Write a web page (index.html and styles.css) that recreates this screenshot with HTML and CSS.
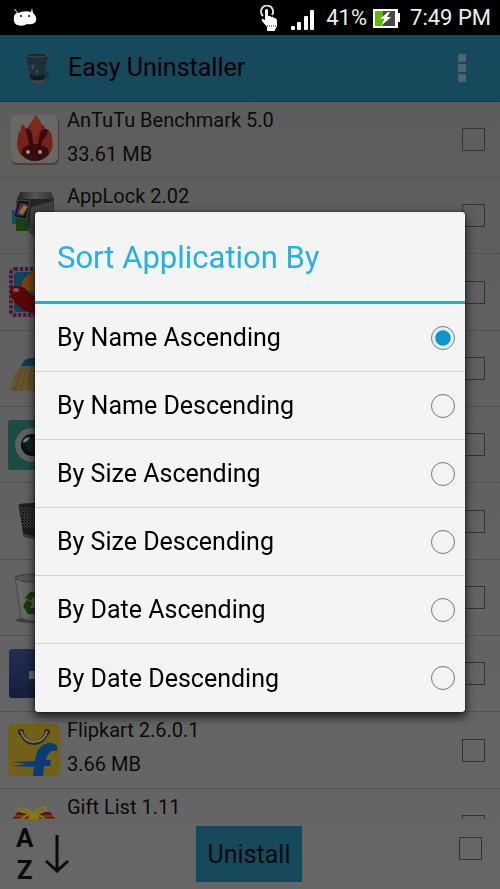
FILE: index.html
```html
<!DOCTYPE html>
<html lang="en">
<head>
<meta charset="utf-8">
<meta name="viewport" content="width=device-width, initial-scale=1">
<title>Easy Uninstaller</title>
<link rel="stylesheet" href="styles.css">
</head>
<body>
<div class="screen">
  <header class="status">
    <svg class="droid" width="24" height="20" viewBox="0 0 24 20"><path d="M2 1l3 4Q11 2 18 4L19 0l1 5Q24 8 23 13Q21 17 14 16Q10 19 4 17Q0 15 1 9Q1 6 4 5L1 1z" fill="#fff"/><circle cx="8" cy="8" r="1"/><circle cx="16" cy="8" r="1"/></svg>
    <svg class="touch" width="18" height="26" viewBox="0 0 18 26"><path d="M3 11A6 6 0 1 1 12 10" fill="none" stroke="#ddd" stroke-width="2"/><path d="M5 5q2-2 3 0v6q2-1 3 1 2-1 3 1 3 0 3 3v5l-2 4v1H7v-4l-5-6q-1-3 1-2l2 1z" fill="#fff"/><path d="M7 21h9" stroke="#222" stroke-dasharray="1 1"/></svg>
    <svg class="signal" width="24" height="22" viewBox="0 0 24 22" fill="#fff"><rect y="17" width="4" height="4" rx="1"/><rect x="6" y="13" width="4" height="8" rx="1"/><rect x="13" y="7" width="4" height="14" rx="1"/><rect x="19" y="1" width="4" height="20" rx="1"/></svg>
    <span class="charge">41%</span>
    <svg class="battery" width="27" height="20" viewBox="0 0 27 20"><path d="M0 1h25v4h2v9h-2v6H0z" fill="#fff"/><path d="M2 3h8v15H2z" fill="#5fb900"/><path d="M10 3h12v15H10z" fill="#484848"/><path d="M15 4L7 11h4l-2 6 9-8h-4l3-5z" fill="#fff"/></svg>
    <span class="clock">7:49 PM</span>
  </header>

  <div class="appbar">
    <svg class="logo" width="28" height="34" viewBox="0 0 28 34"><defs><pattern id="mesh" width="2" height="2" patternUnits="userSpaceOnUse"><rect width="2" height="2" fill="#173746"/><path d="M0 0h1v1H0zM1 1h1v1H1z" fill="#20262a"/></pattern></defs><path d="M17 31l8-6-1-6z" fill="#113746"/><path d="M2 4h22l-4 25q-7 4-13 0z" fill="url(#mesh)" stroke="#30393d"/><path d="M5 23q8 5 16 0l-1 6q-7 4-13 0z" fill="#15191b"/><path d="M7 14l3-2 1 5-3 2zM11 20l3-2 1 4-3 1z" fill="#38454b"/><ellipse cx="13" cy="4" rx="11" ry="2" fill="#20282c" stroke="#414b50"/><path d="M7 28q7 3 13 0v3q-7 3-13 0z" fill="#414749"/></svg>
    <h1 class="name">Easy Uninstaller</h1>
    <button class="more" aria-label="More options"><span class="dot"></span><span class="dot"></span><span class="dot"></span></button>
  </div>

  <ul class="apps">
    <li class="app">
      <svg class="icon" viewBox="0 0 52 52"><rect x="3" y="3" width="48" height="48" rx="6" fill="#424241"/><rect x="3" y="1" width="47" height="48" rx="6" fill="#696865"/><path d="M27 1q-1 6-5 9l-3 5q-5-4-3-5-4 3-3 9l-2-3-1 7q-5 21 17 24 21-3 17-24-1-5-4-8l-1 4q-2-8-6-9-1-5-6-9z" fill="#75221a"/><path d="M27 1q-1 6-5 9l3 14 7-4 1-10q-1-5-6-9z" fill="#7b2d1c"/><path d="M17 15q6-2 7 6l1 9h5l2-12q5-5 8-2-1 7-5 9l-2 6q10 3 7 10-5 6-13 6t-13-6q-2-8 7-10-1-10-4-16z" fill="#390b0e"/><circle cx="20" cy="38" r="2" fill="#959391"/><circle cx="32" cy="38" r="2" fill="#959391"/><path d="M13 12l2-2v3l-2 1z" fill="#752b1c"/></svg>
      <div class="text"><div>AnTuTu Benchmark 5.0</div><div>33.61 MB</div></div>
      <input class="box" type="checkbox" aria-label="AnTuTu Benchmark 5.0">
    </li>
    <li class="app">
      <svg class="icon" viewBox="0 0 52 52"><defs><linearGradient id="steel"><stop stop-color="#222"/><stop offset=".5" stop-color="#555"/><stop offset="1" stop-color="#303030"/></linearGradient></defs><path d="M12 2h31l3 7v32H17L8 12z" fill="url(#steel)"/><path d="M10 9h34v32H22z" fill="#242424"/><path d="M4 20h12v14H4z" fill="#075365"/><path d="M8 28h12v13H8z" fill="#18410e"/><path d="M10 10l12 1-4 18-12-2z" fill="#111" stroke="#454545"/><path d="M12 13l8 1-4 12-8-1z" fill="#522566"/><path d="M16 15l4 2-6 8-3-3z" fill="#91751f"/><path d="M23 17l22-6v32l-20 3-4-4z" fill="#3f3f3f"/><circle cx="37" cy="27" r="5" fill="#222"/></svg>
      <div class="text"><div>AppLock 2.02</div></div>
      <input class="box" type="checkbox" aria-label="AppLock 2.02">
    </li>
    <li class="app">
      <svg class="icon" viewBox="0 0 52 52"><rect x="1" y="1" width="50" height="50" rx="5" fill="#5d535a"/><rect x="3" y="3" width="46" height="46" rx="4" fill="none" stroke="#4c1639" stroke-width="4" stroke-dasharray="3 2"/><rect x="6" y="6" width="40" height="40" rx="4" fill="#07465e"/><path d="M13 23q-1-12 17-20v24z" fill="#78420e"/><path d="M2 27q-1-8 8-7 7 0 11 7 4 5 12 4v18Q8 46 2 27z" fill="#5b0606"/><ellipse cx="8" cy="24" rx="3" ry="2" fill="#8b4e4e"/></svg>
      <div class="text"></div>
      <input class="box" type="checkbox" aria-label="App 3">
    </li>
    <li class="app">
      <svg class="icon" viewBox="0 0 52 52"><path d="M16 16h28l5 32H3q1-18 10-25z" fill="#67532d"/><path d="M13 23q4-8 10-8h17v8z" fill="#083d57"/><path d="M14 25L7 47M18 25l-5 22M23 25l-3 22M28 25v22" stroke="#57461f"/></svg>
      <div class="text"></div>
      <input class="box" type="checkbox" aria-label="App 4">
    </li>
    <li class="app">
      <svg class="icon" viewBox="0 0 52 52"><rect y="1" width="52" height="50" rx="3" fill="#1c4c45"/><circle cx="24" cy="26" r="17" fill="#5c6261"/><circle cx="24" cy="26" r="11" fill="#07110f"/><circle cx="24" cy="26" r="7" fill="#11231f"/><path d="M15 24q0-6 7-6-2 5-7 6z" fill="#78807e"/></svg>
      <div class="text"></div>
      <input class="box" type="checkbox" aria-label="App 5">
    </li>
    <li class="app">
      <svg class="icon" viewBox="0 0 52 52"><defs><pattern id="wire" width="3" height="3" patternUnits="userSpaceOnUse"><rect width="3" height="3" fill="#404040"/><path d="M0 0l3 3M3 0L0 3" stroke="#171717"/></pattern></defs><path d="M11 10h30l-5 31q-10 4-20 0z" fill="url(#wire)" stroke="#202020"/><path d="M15 33h22l-1 8q-10 4-20 0z" fill="#1d1d1f"/><ellipse cx="26" cy="10" rx="15" ry="2" fill="#1e1e1e"/><path d="M15 38q11 5 21 0v4q-10 3-20 0z" fill="#3b3b3f"/></svg>
      <div class="text"></div>
      <input class="box" type="checkbox" aria-label="App 6">
    </li>
    <li class="app">
      <svg class="icon" viewBox="0 0 52 52"><ellipse cx="24" cy="48" rx="16" ry="3" fill="#3d3d3d"/><path d="M7 6h38l-6 40q-12 6-26 0z" fill="#646464" stroke="#4b4b4b"/><ellipse cx="26" cy="6" rx="19" ry="4" fill="#555" stroke="#3a3a3a"/><path d="M11 8l6 38" stroke="#707070"/><path d="M15 34l4-6 6 3-3 5h7v6h-9zM17 26l5-6h9v5h-6l-2 4z" fill="#153d0b"/></svg>
      <div class="text"></div>
      <input class="box" type="checkbox" aria-label="App 7">
    </li>
    <li class="app">
      <svg class="icon" viewBox="0 0 52 52"><defs><linearGradient id="blue" x2="0" y2="1"><stop stop-color="#202f53"/><stop offset="1" stop-color="#12203f"/></linearGradient></defs><rect x="1" y="1" width="50" height="49" rx="3" fill="url(#blue)"/><path d="M21 23h8v-9q1-6 8-6h6v8h-6v7h7v8h-7v19h-8V31h-8z" fill="#686868"/></svg>
      <div class="text"></div>
      <input class="box" type="checkbox" aria-label="App 8">
    </li>
    <li class="app">
      <svg class="icon" viewBox="0 0 52 52"><rect width="52" height="52" rx="5" fill="#706018"/><circle cx="13" cy="8" r="3" fill="#292718"/><circle cx="39" cy="8" r="3" fill="#292718"/><path d="M13 8q4 11 13 11T39 8" fill="none" stroke="#292718" stroke-width="4"/><path d="M13 7q3 11 13 11T39 7" fill="none" stroke="#777570" stroke-width="2"/><path d="M3 42l16-2-14-2 22-1q2-18 16-18 7 0 6 8-9-2-11 9h5l-1 6h-6l-1 10H25l1-9z" fill="#083c76"/></svg>
      <div class="text"><div>Flipkart 2.6.0.1</div><div>3.66 MB</div></div>
      <input class="box" type="checkbox" aria-label="Flipkart 2.6.0.1">
    </li>
    <li class="app">
      <svg class="icon" viewBox="0 0 52 52"><path d="M10 11h32l7 9v30H3V19z" fill="#690f11"/><path d="M6 15h40M3 18h46" stroke="#806b1b"/><path d="M22 11h8l2 9H20z" fill="#867718"/><path d="M25 12Q14 5 11 8q-1 3 11 4l-9 6M26 12Q35 4 38 7q1 4-10 5l9 6" fill="none" stroke="#83791c" stroke-width="2"/></svg>
      <div class="text"><div>Gift List 1.11</div></div>
      <input class="box" type="checkbox" aria-label="Gift List 1.11">
    </li>
  </ul>

  <footer class="actions">
    <button class="sort" aria-label="Sort A to Z">
      <span class="letters"><span>A</span><span>Z</span></span>
      <svg width="24" height="40" viewBox="0 0 24 40" fill="none" stroke="#0b0b0b" stroke-width="3"><path d="M12 1v36M1 27l11 10 11-10"/></svg>
    </button>
    <button class="remove">Unistall</button>
    <input class="box" type="checkbox" aria-label="Select all">
  </footer>
</div>

<div class="overlay">
  <form class="dialog" role="dialog" aria-labelledby="sort-title">
    <h2 class="title" id="sort-title">Sort Application By</h2>
    <label class="option">By Name Ascending<input class="radio" type="radio" name="sort" checked></label>
    <label class="option">By Name Descending<input class="radio" type="radio" name="sort"></label>
    <label class="option">By Size Ascending<input class="radio" type="radio" name="sort"></label>
    <label class="option">By Size Descending<input class="radio" type="radio" name="sort"></label>
    <label class="option">By Date Ascending<input class="radio" type="radio" name="sort"></label>
    <label class="option">By Date Descending<input class="radio" type="radio" name="sort"></label>
  </form>
</div>
</body>
</html>
```
FILE: styles.css
```css
* {
  box-sizing: border-box;
}

body {
  margin: 0;
  font-family: Roboto, "Liberation Sans", sans-serif;
  color: #0b0b0b;
}

button {
  border: 0;
  padding: 0;
  background: none;
  font: inherit;
  color: inherit;
}

.screen {
  display: flex;
  flex-direction: column;
  height: 100vh;
  overflow: hidden;
  background: linear-gradient(#5c5c5c, #666);
}

.status {
  display: flex;
  align-items: center;
  flex: none;
  height: 35px;
  padding: 0 9px 0 13px;
  background: #000;
  color: #eee;
  font-size: 22px;
}

.touch {
  margin-left: auto;
}

.signal {
  margin: 4px 11px 0 13px;
}

.battery {
  margin: 0 10px 0 6px;
}

.appbar {
  display: flex;
  align-items: center;
  flex: none;
  height: 67px;
  padding: 0 34px 0 24px;
  border-bottom: 1px solid #033f51;
  background: #16495c;
}

.name {
  flex: 1;
  margin: 0 0 0 16px;
  font-size: 25px;
  font-weight: 400;
  line-height: 32px;
  color: #000;
}

.more {
  display: grid;
  gap: 2px;
}

.dot {
  width: 8px;
  height: 8px;
  background: #50646c;
}

.apps {
  flex: 1;
  min-height: 0;
  margin: 0;
  padding: 0;
  overflow: hidden;
  list-style: none;
}

.app {
  display: flex;
  align-items: center;
  height: 76px;
  padding: 0 15px 0 8px;
  border-bottom: 1px solid #535353;
}

.app:nth-child(3n) {
  height: 77px;
}

.icon {
  flex: none;
  width: 52px;
  height: 52px;
}

.text {
  flex: 1;
  align-self: flex-start;
  margin-left: 7px;
  padding-top: 1px;
  font-size: 20px;
  line-height: 34px;
}

.box {
  appearance: none;
  flex: none;
  width: 23px;
  height: 23px;
  margin: 0;
  border: 1px solid #343434;
}

.actions {
  display: grid;
  grid-template-columns: 1fr auto 1fr;
  align-items: center;
  flex: none;
  height: 70px;
  padding: 0 18px 0 16px;
}

.sort {
  display: flex;
  align-items: center;
  gap: 12px;
  justify-self: start;
}

.letters {
  display: grid;
  font-size: 26px;
  font-weight: 700;
  line-height: 32px;
}

.remove {
  height: 56px;
  padding: 0 11px;
  border: 1px solid #0c4c61;
  background: #16495c;
  font-size: 25px;
}

.actions .box {
  justify-self: end;
  margin-bottom: 12px;
}

.overlay {
  position: fixed;
  inset: 34px 0 0;
  display: flex;
  align-items: center;
  padding: 0 35px;
}

.dialog {
  flex: 1;
  border-radius: 3px;
  background: #f4f4f4;
  box-shadow: 0 4px 10px 1px rgba(0, 0, 0, 0.7), 0 0 2px #222;
  color: #000;
}

.title {
  margin: 0;
  padding: 2px 0 0 22px;
  border-bottom: 3px solid #1bb2e2;
  font-size: 31px;
  font-weight: 400;
  line-height: 87px;
  color: #22b3e4;
}

.option {
  display: flex;
  align-items: center;
  justify-content: space-between;
  height: 68px;
  padding: 1px 10px 0 22px;
  border-bottom: 1px solid #d2d2d2;
  font-size: 25px;
}

.option:last-child {
  border-bottom: 0;
}

.radio {
  appearance: none;
  width: 24px;
  height: 24px;
  margin: 0;
  border: 1px solid #777;
  border-radius: 50%;
}

.radio:checked {
  background: radial-gradient(circle, #0899d0 0 6px, #0784b3 7px, #c9e8f4 8px, #e7f2f6 10px);
}
```
